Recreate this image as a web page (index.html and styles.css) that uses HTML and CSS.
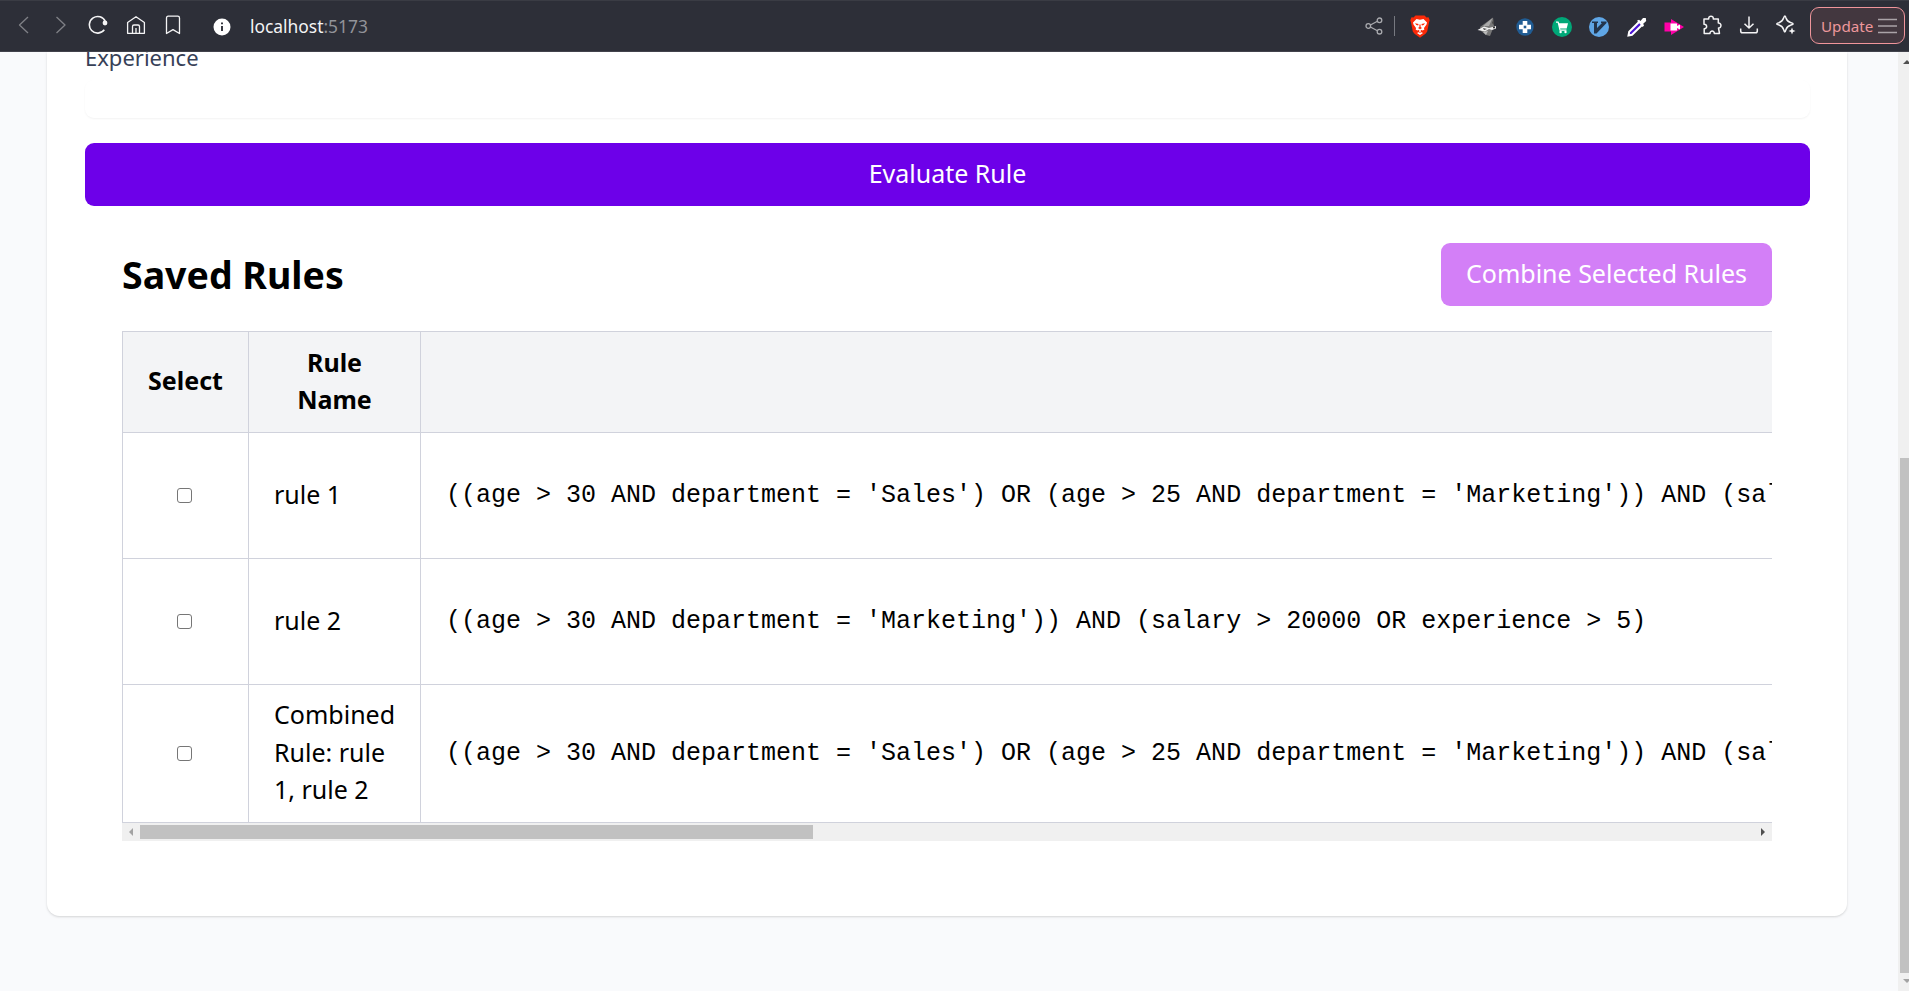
FILE: index.html
```html
<!DOCTYPE html>
<html lang="en">
<head>
<meta charset="utf-8">
<title>Rule Engine</title>
<link rel="stylesheet" href="styles.css">
</head>
<body>
<header class="toolbar">
  <nav class="nav">
    <span class="cell"><svg class="icon dim" viewBox="0 0 20 20"><path d="M14 2 L5.5 10 L14 18"/></svg></span>
    <span class="cell"><svg class="icon dim" viewBox="0 0 20 20"><path d="M5.500 2 L14 10 L5.500 18"/></svg></span>
    <span class="cell"><svg class="icon" viewBox="0 0 20 20"><path stroke-width="1.6" d="M17.300 6.500 A8.300 8.300 0 1 0 16.300 14.800"/><circle class="solid" cx="17" cy="8" r="2.400"/></svg></span>
    <span class="cell"><svg class="icon" viewBox="0 0 20 20"><path d="M1.600 7.500 L10 1.700 L18.400 7.500 V18.300 H1.600 Z M6.500 18 V11.500 Q6.500 10 8 10 H12 Q13.500 10 13.500 11.500 V18 M10 13 V18"/></svg></span>
    <span class="cell"><svg class="icon" viewBox="0 0 20 20"><path d="M3.500 3 Q3.500 1.200 5.300 1.200 H14.700 Q16.500 1.200 16.500 3 V18.500 L10 14.600 L3.500 18.500 Z"/></svg></span>
  </nav>
  <svg class="info" viewBox="0 0 18 18"><circle cx="9" cy="9" r="8.500" fill="#fff"/><path d="M9 4.500 V6.300 M9 8 V13" stroke="#2d2f38" stroke-width="1.900"/></svg>
  <div class="address">localhost<span class="port">:5173</span></div>
  <svg class="share" viewBox="0 0 18 18"><g fill="none" stroke="#a9aaae" stroke-width="1.300"><circle cx="3.300" cy="9" r="2.300"/><circle cx="14.500" cy="3.300" r="2.300"/><circle cx="14.500" cy="14.700" r="2.300"/><path d="M5.400 8 L12.400 4.300 M5.400 10 L12.400 13.700"/></g></svg>
  <span class="divider"></span>
  <svg class="brave" viewBox="0 0 20 23"><path fill="#fb2a08" d="M5.500 0.500 H14.500 L16.500 2.500 L18.500 2.300 L19.700 5.300 L19 7.500 L17.200 16.500 L15.500 18.800 L10 22.700 L4.500 18.800 L2.800 16.500 L1 7.500 L0.300 5.300 L1.500 2.300 L3.500 2.500 Z"/><path fill="#fff" d="M6.500 4 L10 4.700 L13.500 4 L17 7.500 L16.500 9.500 L14 13 L14.300 14.800 L12.300 15.400 L10.800 14.800 V17 L13 18 L10 20 L7 18 L9.200 17 V14.800 L7.700 15.400 L5.700 14.800 L6 13 L3.500 9.500 L3 7.500 Z"/><path fill="#fb2a08" d="M5 8.300 L8.600 9 L8.100 10.500 L6.300 10 Z M15 8.300 L11.400 9 L11.900 10.500 L13.700 10 Z M8 13 L9.400 12 V9.500 H10.600 V12 L12 13 L10 14.200 Z M9 16.600 L10 17.500 L11 16.600 L11 17.200 L10 18.300 L9 17.200 Z"/></svg>
  <div class="extensions">
    <span class="cell"><svg class="glyph" viewBox="0 0 20 20"><path fill="#777" d="M3 10 L16 0.500 L17 9 L13 19 L9 18 L4 14 Z"/><path fill="#aaa" d="M6 9 L15.500 1 L12 9 Z"/><path fill="#eee" d="M0.500 13 L7 9.500 L12 11 L19 9 V11.500 L15 13 L12 12 L8 14.500 Z"/><path fill="#444" d="M6 11 L10 12 L7 13 Z M15 6 L16.500 2 L17 8 Z"/><circle cx="17" cy="10.500" r="1" fill="#222"/><path fill="#bbb" d="M6 15 L11 14 L9 18 Z"/></svg></span>
    <span class="cell"><svg class="glyph" viewBox="0 0 20 20"><circle cx="10" cy="10" r="8.700" fill="#205c93"/><path fill="#fff" d="M7.700 4 H12.300 V7.700 H16 V12.300 H12.300 V16 H7.700 V12.300 H4 V7.700 H7.700 Z"/><path fill="#205c93" d="M8.700 8.700 H11.300 V11.300 H8.700 Z"/></svg></span>
    <span class="cell"><svg class="glyph" viewBox="0 0 20 20"><circle cx="10" cy="10" r="10" fill="#00a878"/><path fill="#fff" d="M4 4.500 H6.500 L7.200 6.300 H16 L14.700 11.500 H8.100 L8.400 12.500 H14.500 V13.700 H7.500 L5.700 5.800 H4 Z"/><circle cx="8.600" cy="15" r="1.200" fill="#fff"/><circle cx="13.500" cy="15" r="1.200" fill="#fff"/></svg></span>
    <span class="cell"><svg class="glyph" viewBox="0 0 20 20"><circle cx="10" cy="10" r="10" fill="#5fa6e6"/><path fill="#23354c" d="M3 4.500 H9 V6 H8 V11 L13 6 L12 5.900 V4.500 H17.500 V6 L7.500 16.500 H5 V6 H3 Z"/></svg></span>
    <span class="cell"><svg class="glyph" viewBox="0 0 20 20"><path d="M12 5 L2.200 14.800 L1.500 18.500 L5 17.800 L15 8" fill="#4a12d4" stroke="#fff" stroke-width="2"/><path d="M10 3.700 L12 2.800 L13.500 4 L16 1 L18.800 1 L19.200 4 L16.200 6.700 L17 8.500 L15.700 10 Z" fill="#fff"/></svg></span>
    <span class="cell"><svg class="glyph" viewBox="0 0 20 20"><path fill="#ff00a8" d="M0.500 5.500 H7 V2 L20 10 L7 18 V14.500 H0.500 Z"/><path fill="#fff" d="M6.500 6.500 H13 V9 L16 7.500 V12.500 L13 11 V13.500 H6.500 Z"/></svg></span>
    <span class="cell"><svg class="icon" viewBox="0 0 20 20"><path stroke-width="1.500" d="M2 4 H6.700 C6.300 0.200 11.700 0.200 11.300 4 H16.300 V8 C19.800 7.700 19.800 13 16.500 13 L17.500 18.500 H12.300 C12.700 15.300 7.700 15.300 8 18.500 H2.200 V13.700 C5.500 14 5.500 9 2 9.300 Z"/></svg></span>
    <span class="cell"><svg class="icon" viewBox="0 0 20 20"><path stroke-width="1.500" d="M10 1.500 V12.800 M5.500 8.700 L10 13 L14.500 8.700 M1.700 13.500 V16 Q1.700 17.800 3.500 17.800 H16.500 Q18.300 17.800 18.300 16 V13.500"/></svg></span>
    <span class="cell"><svg class="icon" viewBox="0 0 20 20"><path stroke-width="1.500" d="M9 1 Q9.500 1 10 3 Q11 6.500 14.500 7.500 Q17.200 8.300 17.200 9 Q17.200 9.500 14.500 10.200 Q11 11.200 10 14.500 Q9.300 17 8.800 17 Q8.300 17 7.600 14.500 Q6.500 11 3 10 Q0.700 9.400 0.700 9 Q0.700 8.300 3 7.700 Q6.500 6.500 7.600 3 Q8.400 1 9 1 Z"/><path class="solid" d="M16 12.500 L17 15 L19.500 16 L17 17 L16 19.500 L15 17 L12.500 16 L15 15 Z"/></svg></span>
  </div>
  <button class="update">Update<svg class="burger" viewBox="0 0 19 16"><path d="M0 1.500 H19 M0 8 H19 M0 14.500 H19"/></svg></button>
</header>
<div class="viewport">
  <main class="page">
    <section class="card">
      <label class="label">Experience</label>
      <div class="field"></div>
      <button class="btn evaluate">Evaluate Rule</button>
      <div class="rules">
        <div class="rules-head">
          <h2 class="title">Saved Rules</h2>
          <button class="btn combine">Combine Selected Rules</button>
        </div>
        <div class="table-wrap">
          <table class="table">
            <colgroup><col class="col-select"><col class="col-name"><col class="col-rule"></colgroup>
            <tr class="row-head"><th>Select</th><th>Rule Name</th><th></th></tr>
            <tr class="row"><td class="center"><input class="check" type="checkbox"></td><td>rule 1</td><td class="code">((age &gt; 30 AND department = 'Sales') OR (age &gt; 25 AND department = 'Marketing')) AND (salary</td></tr>
            <tr class="row"><td class="center"><input class="check" type="checkbox"></td><td>rule 2</td><td class="code">((age &gt; 30 AND department = 'Marketing')) AND (salary &gt; 20000 OR experience &gt; 5)</td></tr>
            <tr class="row-tall"><td class="center"><input class="check" type="checkbox"></td><td>Combined Rule: rule 1, rule 2</td><td class="code">((age &gt; 30 AND department = 'Sales') OR (age &gt; 25 AND department = 'Marketing')) AND (salary</td></tr>
          </table>
        </div>
        <div class="hscroll">
          <svg class="arrow" viewBox="0 0 18 18"><path fill="#a3a3a3" d="M11 5 V13 L7 9 Z"/></svg>
          <span class="hthumb"></span>
          <svg class="arrow" viewBox="0 0 18 18"><path fill="#505050" d="M7 5 V13 L11 9 Z"/></svg>
        </div>
      </div>
    </section>
  </main>
  <aside class="vscroll">
    <svg class="varrow" viewBox="0 0 11 18"><path fill="#505050" d="M5 12 H13 L9 8 Z"/></svg>
    <span class="vthumb"></span>
    <svg class="varrow" viewBox="0 0 11 18"><path fill="#a3a3a3" d="M5 6 H13 L9 10 Z"/></svg>
  </aside>
</div>
</body>
</html>
```

FILE: styles.css
```css
* { box-sizing: border-box; }
body {
  margin: 0;
  height: 991px;
  overflow: hidden;
  display: flex;
  flex-direction: column;
  font: 25px/37.5px "Noto Sans", sans-serif;
  color: #000;
}
svg { display: block; flex: none; }
button { font-family: inherit; border: 0; margin: 0; }

.toolbar {
  height: 52px;
  flex: none;
  display: flex;
  align-items: center;
  padding: 0 4px 0 5px;
  background: #2d2f38;
  border-top: 1px solid #3a3c44;
  border-bottom: 1px solid #42434c;
}
.nav, .extensions { display: flex; }
.cell { width: 37.4px; height: 50px; display: flex; align-items: center; justify-content: center; }
.icon { width: 20px; height: 20px; fill: none; stroke: #f4f4f5; stroke-width: 1.3; stroke-linejoin: round; margin-bottom: 2px; }
.dim { stroke: #7f8086; }
.solid { fill: #f4f4f5; stroke: none; }
.glyph { width: 20px; height: 20px; margin-top: 2px; }
.info { width: 18px; height: 18px; margin: 1px 0 0 21px; }
.address { flex: 1; margin-left: 19px; font-size: 17.4px; line-height: 24px; color: #f4f4f5; }
.port { color: #929399; }
.share { width: 18px; height: 18px; }
.divider { width: 1px; height: 20px; margin: 0 15px 0 11px; background: #777980; }
.brave { width: 20px; height: 23px; margin: 1px 38px 0 0; }
.update {
  width: 95px;
  height: 37px;
  margin: 0 0 1px 5px;
  padding: 0 7px 0 10px;
  display: flex;
  align-items: center;
  justify-content: space-between;
  border: 1px solid #f0959b;
  border-radius: 9px;
  background: #43373f;
  color: #ee979c;
  font-size: 15.2px;
}
.burger { width: 19px; height: 16px; fill: none; stroke: #aaa3a8; stroke-width: 1.3; }

.viewport { flex: 1; min-height: 0; display: flex; overflow: hidden; }
.page { flex: 1; padding: 0 51px 0 47px; background: #f9fafc; overflow: hidden; }
.card {
  display: flow-root;
  height: 864px;
  padding: 0 37px 0 38px;
  background: #fff;
  border-radius: 0 0 12.5px 12.5px;
  box-shadow: 0 1px 3px rgba(0,0,0,.1), 0 1px 2px rgba(0,0,0,.06);
}
.label { display: block; margin-top: -10px; font-size: 22px; line-height: 31px; color: #374157; }
.field { height: 38px; margin: 7px 0 25px; border-radius: 9px; background: #fff; box-shadow: 0 1px 2px rgba(0,0,0,.05); }
.btn { height: 63px; border-radius: 9px; color: #fff; font-size: 25px; line-height: 37.5px; padding: 0 0 2px; text-align: center; }
.evaluate { display: block; width: 100%; background: #6d00e9; }
.rules { padding: 37px 38px 0 37px; }
.rules-head { display: flex; justify-content: space-between; align-items: center; margin-bottom: 25px; }
.title { margin: 0; font-size: 37.5px; line-height: 50px; font-weight: 700; }
.combine { width: 331px; background: #d37ff7; }

.table-wrap { overflow: hidden; height: 492px; }
.table { width: 1699px; table-layout: fixed; border-collapse: collapse; }
.col-select { width: 126px; }
.col-name { width: 172px; }
.row-head { height: 101px; background: #f3f4f6; }
.row { height: 126px; }
.row-tall { height: 138px; }
.table th, .table td { border: 1px solid #d0d2dc; padding: 11px 25px 13px; text-align: left; vertical-align: middle; }
.table th { text-align: center; font-weight: 700; }
.table .center { padding: 0 2px 0 0; }
.check {
  display: block;
  appearance: none;
  width: 15px;
  height: 15px;
  margin: 0 auto;
  border: 1px solid #767676;
  border-radius: 3px;
  background: #fff;
}
.table .code { padding: 12px 25px; font-family: "Liberation Mono", monospace; white-space: nowrap; }
.hscroll { height: 18px; display: flex; align-items: center; background: #f0f0f0; }
.arrow { width: 18px; height: 18px; }
.hthumb { width: 673px; height: 14px; margin-right: auto; background: #c1c1c1; }
.vscroll { width: 11px; flex: none; display: flex; flex-direction: column; background: #f0f0f0; }
.varrow { width: 11px; height: 18px; }
.vthumb { width: 9px; height: 515px; margin: auto 0 0 2px; background: #c1c1c1; }
```
